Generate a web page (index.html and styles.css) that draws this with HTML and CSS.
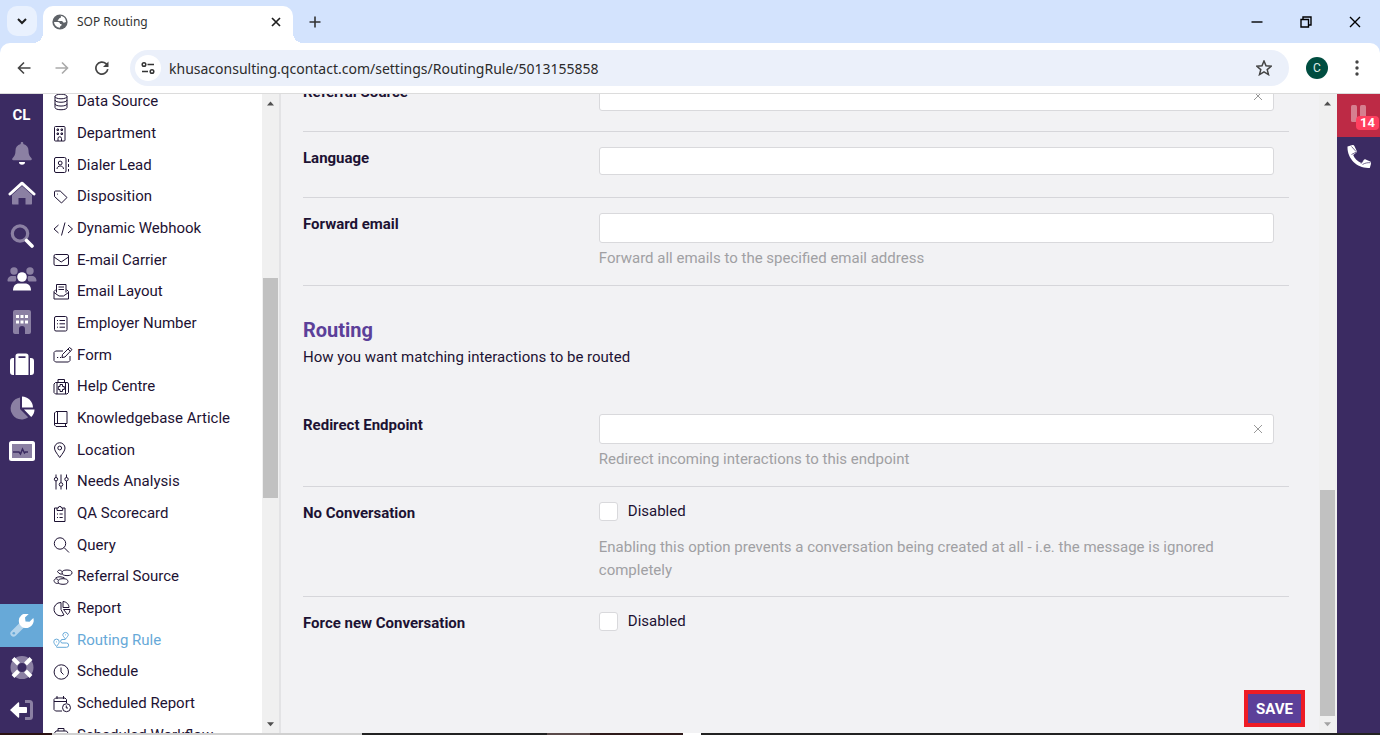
FILE: index.html
```html
<!DOCTYPE html>
<html lang="en">
<head>
<meta charset="utf-8">
<title>SOP Routing</title>
<link rel="stylesheet" href="styles.css">
</head>
<body>
<header class="browser">
  <div class="tabstrip">
    <button class="tab-search" aria-label="Search tabs"><svg width="12" height="12" viewBox="0 0 12 12"><path d="M2 4l4 4 4-4" fill="none" stroke="#1f1f1f" stroke-width="2"/></svg></button>
    <div class="tab">
      <svg width="16" height="16" viewBox="0 0 16 16"><circle cx="8" cy="8" r="7.6" fill="#5f6368"/><path d="M8 1.800c1.700.5 1.200 2-.2 2.300-.8.2-.6 1.200-1.400 1.500-1.200.4-.8 1.500.4 1.500h3c1 0 .8 1.600 2 1.600l2.300-.6a6.200 6.200 0 0 0-2-4.800A6 6 0 0 0 8 1.800zM2 8h4c1.600 0 2 1 2 2h1.500v1.600c-1 .2-1.500.8-1.500 2.200A6 6 0 0 1 2 8z" fill="#fff"/></svg>
      <span class="tab-title">SOP Routing</span>
      <button class="plain" aria-label="Close tab"><svg width="10" height="10" viewBox="0 0 10 10"><path d="M1 1l8 8M9 1l-8 8" stroke="#1f1f1f" stroke-width="1.700"/></svg></button>
    </div>
    <button class="plain new-tab" aria-label="New tab"><svg width="12" height="12" viewBox="0 0 12 12"><path d="M6 .5v11M.5 6h11" stroke="#333" stroke-width="1.600"/></svg></button>
    <div class="window-buttons">
      <button class="plain" aria-label="Minimize"><svg width="12" height="12" viewBox="0 0 12 12"><path d="M.5 6h11" stroke="#000" stroke-width="1.400"/></svg></button>
      <button class="plain" aria-label="Restore"><svg width="12" height="12" viewBox="0 0 12 12"><path d="M1 3.500h7.500V11H1zM3 3.500V1h8v8H8.500" fill="none" stroke="#000" stroke-width="1.400"/></svg></button>
      <button class="plain" aria-label="Close"><svg width="12" height="12" viewBox="0 0 12 12"><path d="M1 1l10 10M11 1L1 11" stroke="#000" stroke-width="1.400"/></svg></button>
    </div>
  </div>
  <div class="toolbar">
    <button class="plain nav" aria-label="Back"><svg width="14" height="14" viewBox="0 0 14 14"><path d="M13.500 7H2M7 1.500L1.500 7 7 12.500" fill="none" stroke="#444" stroke-width="1.600"/></svg></button>
    <button class="plain nav" aria-label="Forward"><svg width="14" height="14" viewBox="0 0 14 14"><path d="M.5 7H12M7 1.500L12.500 7 7 12.500" fill="none" stroke="#aaa" stroke-width="1.600"/></svg></button>
    <button class="plain nav reload" aria-label="Reload"><svg width="14" height="14" viewBox="0 0 14 14"><path d="M12.800 8.200A6 6 0 1 1 11 2.700l1.500 1.500" fill="none" stroke="#444" stroke-width="1.700"/><path d="M13.500.5V6H8z" fill="#444"/></svg></button>
    <div class="omnibox">
      <button class="site-info" aria-label="Site information"><svg width="14" height="14" viewBox="0 0 14 14" fill="none" stroke="#333" stroke-width="1.500"><circle cx="3" cy="3.500" r="1.800"/><path d="M6.500 3.500h6.500M1 10.500h6"/><circle cx="11" cy="10.500" r="1.800"/></svg></button>
      <input class="url" type="text" aria-label="Address" value="khusaconsulting.qcontact.com/settings/RoutingRule/5013155858">
      <button class="plain star" aria-label="Bookmark"><svg width="16" height="16" viewBox="0 0 16 16"><path d="M8 1l2 4.800 5.200.4-4 3.400 1.300 5L8 11.900l-4.500 2.700 1.300-5-4-3.400 5.200-.4z" fill="none" stroke="#444" stroke-width="1.500"/></svg></button>
    </div>
    <button class="avatar" aria-label="Profile">C</button>
    <button class="plain more" aria-label="More"><svg width="4" height="16" viewBox="0 0 4 16" fill="#444"><circle cx="2" cy="2" r="1.700"/><circle cx="2" cy="8" r="1.700"/><circle cx="2" cy="14" r="1.700"/></svg></button>
  </div>
</header>

<div class="app">
  <nav class="rail" aria-label="Main">
    <a class="rail-user" href="#">CL</a>
    <a class="rail-bell" href="#" aria-label="Notifications"><svg width="22" height="24" viewBox="0 0 22 24"><path class="dim" d="M11 1c.8 0 1.300.5 1.300 1.200V3c3.500.7 5.200 3.500 5.200 6.500 0 4 1.200 6 3 7.700.8.800.2 2-.8 2H2.300c-1 0-1.600-1.200-.8-2 1.800-1.700 3-3.700 3-7.700 0-3 1.700-5.800 5.200-6.500v-.8C9.700 1.500 10.200 1 11 1z"/><path class="lit" d="M8 21h6a3 2.800 0 0 1-6 0z"/></svg></a>
    <a href="#" aria-label="Home"><svg width="28" height="24" viewBox="0 0 28 24"><path class="dim" d="M14 5L4 14v8.500c0 .6.400 1 1 1h5.500V17h7v6.500H23c.6 0 1-.4 1-1V14z"/><path d="M2 13L14 2.200 26 13" fill="none" stroke="#fff" stroke-width="3" stroke-linecap="round" stroke-linejoin="round"/></svg></a>
    <a href="#" aria-label="Search"><svg width="24" height="24" viewBox="0 0 24 24"><circle cx="10" cy="9.500" r="7.700" fill="none" stroke="#8b80a3" stroke-width="3.200"/><path d="M16.500 16.500L22 22" stroke="#fff" stroke-width="3.600" stroke-linecap="round"/></svg></a>
    <a href="#" aria-label="Contacts"><svg width="30" height="24" viewBox="0 0 30 24"><g class="dim"><circle cx="7" cy="4" r="3.700"/><circle cx="23" cy="4" r="3.700"/><path d="M.5 14c0-3.500 2-5 4.500-5h3.500c1 0 1.200 5-.5 5.500H1zM29.500 14c0-3.500-2-5-4.500-5h-3.500c-1 0-1.200 5 .5 5.500h7z"/></g><circle class="lit" cx="15" cy="10" r="4.800"/><path class="lit" d="M6 23.500c0-4.500 2.500-7 6-7h6c3.500 0 6 2.500 6 7z"/></svg></a>
    <a href="#" aria-label="Companies"><svg width="20" height="24" viewBox="0 0 20 24"><path class="dim" d="M3 0h14a2 2 0 0 1 2 2v20a2 2 0 0 1-2 2h-4v-5a3 3 0 0 0-6 0v5H3a2 2 0 0 1-2-2V2a2 2 0 0 1 2-2z"/><path class="lit" d="M4 5h3v3H4zM8.500 5h3v3h-3zM13 5h3v3h-3zM4 10.500h3v3H4zM8.500 10.500h3v3h-3zM13 10.500h3v3h-3z"/></svg></a>
    <a href="#" aria-label="Cases"><svg width="24" height="24" viewBox="0 0 24 24"><path class="lit" d="M0 8a3 3 0 0 1 3-3h1v17H3a3 3 0 0 1-3-3zM24 8a3 3 0 0 0-3-3h-1v17h1a3 3 0 0 0 3-3zM5.500 22V3a2.500 2.500 0 0 1 2.500-2.500h8A2.500 2.500 0 0 1 18.500 3v19zM8.500 5h7V3.200h-7z"/></svg></a>
    <a href="#" aria-label="Reports"><svg width="26" height="24" viewBox="0 0 26 24"><path class="dim" d="M11 1.500V13l8.200 8.200A11 11 0 1 1 11 1.500z"/><path class="lit" d="M13 .5c6 0 11 5 11 11H13zM15 13.500h10.500c0 3-1.300 5.700-3.300 7.500z"/></svg></a>
    <a href="#" aria-label="Monitor"><svg width="26" height="22" viewBox="0 0 26 22"><rect class="lit" y="1" width="26" height="20" rx="2.500"/><rect x="3" y="4" width="20" height="14" fill="#8b80a3"/><path d="M4 12h6l1.500 2 2-5 2 4 1-1H19" fill="none" stroke="#3b2b62" stroke-width="1.500"/></svg></a>
    <div class="rail-bottom">
      <a class="active" href="#" aria-label="Settings"><svg width="24" height="24" viewBox="0 0 24 24"><path d="M3.500 19.500L12 11" stroke="#b3d4ec" stroke-width="6.200" stroke-linecap="round"/><circle cx="3.800" cy="19.200" r="1.300" fill="#67a9d8"/><path class="lit" d="M23.300 4L19.500 7.800l-4-.3-.5-4L18.800-.1A7.500 7.500 0 0 0 9 8.500c.6 2.600 3 5.300 6 5.500A7.600 7.600 0 0 0 23.300 4z"/></svg></a>
      <a class="short" href="#" aria-label="Help"><svg width="24" height="24" viewBox="0 0 24 24"><circle cx="12" cy="11.500" r="8" fill="none" stroke="#8b80a3" stroke-width="7"/><path d="M3 2.500L8.500 8M21 2.500L15.500 8M3 20.500L8.500 15M21 20.500L15.500 15" stroke="#fff" stroke-width="4"/></svg></a>
      <a class="short" href="#" aria-label="Log out"><svg width="24" height="22" viewBox="0 0 24 22"><path d="M15 2.500h4.500a2 2 0 0 1 2 2v13a2 2 0 0 1-2 2H15" fill="none" stroke="#8b80a3" stroke-width="3"/><path class="lit" d="M0 11l8-7.500c.6-.5 1.200-.2 1.200.7V8H16c.6 0 1 .4 1 1v4c0 .6-.4 1-1 1H9.200v3.800c0 .9-.6 1.200-1.200.7z"/></svg></a>
    </div>
  </nav>

  <aside class="menu">
    <div class="menu-view">
    <ul class="menu-list">
      <li><a href="#"><svg viewBox="0 0 20 18"><ellipse cx="8" cy="3.500" rx="6" ry="2.300"/><path d="M2 3.500v11c0 3 12 3 12 0v-11M2 7c0 3 12 3 12 0M2 10.800c0 3 12 3 12 0"/></svg>Data Source</a></li>
      <li><a href="#"><svg viewBox="0 0 20 18"><rect x="1.500" y="1.500" width="10.500" height="14.500" rx="1"/><path d="M5 16v-2.500a1.700 1.700 0 0 1 3.500 0V16M4 4h1.500v1.500H4zM8 4h1.500v1.500H8zM4 8h1.500v1.500H4zM8 8h1.500v1.500H8z"/></svg>Department</a></li>
      <li><a href="#"><svg viewBox="0 0 20 18"><rect x="1.500" y="1.500" width="11.500" height="15" rx="1.500"/><circle cx="7.200" cy="7" r="1.900"/><path d="M4 13c0-4 6.500-4 6.500 0M15.500 3v3M15.500 8v3M15.500 13v2.500"/></svg>Dialer Lead</a></li>
      <li><a href="#"><svg viewBox="0 0 20 18"><path d="M1.500 4a1 1 0 0 1 1-1h4.700L14 9.500 8.500 15 1.500 8.500zM4.500 5.700v.8"/></svg>Disposition</a></li>
      <li><a href="#"><svg viewBox="0 0 20 18"><path d="M5.500 5L1 9l4.500 4M15 5l4.500 4-4.500 4M12 2.500l-3.500 13"/></svg>Dynamic Webhook</a></li>
      <li><a href="#"><svg viewBox="0 0 20 18"><rect x="1" y="3.500" width="14.500" height="11" rx="1.500"/><path d="M1 6l7.200 5 7.300-5"/></svg>E-mail Carrier</a></li>
      <li><a href="#"><svg viewBox="0 0 20 18"><path d="M3.500 9.500v-8h9.500v8M5.500 4h5.500M5.500 6.500h5.500M3 6.500L1 8.500v7.500h14.500v-7.500l-2-2M1 9.500l5 3.500h4.500l5-3.500"/></svg>Email Layout</a></li>
      <li><a href="#"><svg viewBox="0 0 20 18"><rect x="1.500" y="1.500" width="12.500" height="14.500" rx="1.500"/><path d="M4 5.500h1M6.500 5.500H12M4 8.800h1M6.500 8.800H12M4 12.200h1M6.500 12.200H12"/></svg>Employer Number</a></li>
      <li><a href="#"><svg viewBox="0 0 20 18"><path d="M10 5H2.500L1 6.500v8L2.500 16h13l1.500-1.500V10M9.500 8.500L16.500 1.500l2.500 2-7 7.500-3 .5zM15 3l2.500 2.500M4 11.500h1.200M7 11.500h1.200"/></svg>Form</a></li>
      <li><a href="#"><svg viewBox="0 0 20 18"><path d="M5 4V1.500h6.500V4M4 4.500v11.500M12.500 4.500v11.500M2.500 4.500h11.500a1.500 1.500 0 0 1 1.500 1.500v8.500l-1.500 1.500H2.500L1 14.500V6zM7 6.500h2.500v2h1.800v3H9.500v2H7v-2H5.300v-3H7z"/></svg>Help Centre</a></li>
      <li><a href="#"><svg viewBox="0 0 20 18"><path d="M14 13.500v-12H3L1.500 3v12L3 16.500h11M2 13.500h12M4.500 1.500v12M12.500 13.500v3"/></svg>Knowledgebase Article</a></li>
      <li><a href="#"><svg viewBox="0 0 20 18"><path d="M6.700 16.500C3.500 12 1.500 9.500 1.500 7a5.200 5.200 0 0 1 10.500 0c0 2.500-2 5-5.300 9.500z"/><circle cx="6.700" cy="7" r="1.900"/></svg>Location</a></li>
      <li><a href="#"><svg viewBox="0 0 20 18"><path d="M3 1.500v3M3 8v8.500M8 1.500v8M8 13.500v3M13.500 1.500v3M13.500 8v8.500"/><circle cx="3" cy="6.200" r="1.700"/><circle cx="8" cy="11.500" r="1.800"/><circle cx="13.500" cy="6.200" r="1.700"/></svg>Needs Analysis</a></li>
      <li><a href="#"><svg viewBox="0 0 20 18"><path d="M4 3H1.500v13.500H12V3H9.700M4 5.500h5.700V3H8.500a1.500 1.500 0 0 0-3.200 0H4zM4 9h1M6.500 9h3.200M4 12.500h1M6.500 12.500h3.200"/></svg>QA Scorecard</a></li>
      <li><a href="#"><svg viewBox="0 0 20 18"><circle cx="7" cy="7.500" r="5.700"/><path d="M11 11.500l5 5"/></svg>Query</a></li>
      <li><a href="#"><svg viewBox="0 0 20 18"><ellipse cx="14" cy="4.800" rx="5" ry="2.800"/><path d="M9.300 3.800C8 1.800 5.500 1.500 4.500 3.500 6 6 8 6.500 9.500 6"/><ellipse cx="10" cy="13.500" rx="5" ry="2.800"/><path d="M5.500 12.200C4 10.200 1.500 10.500 1 12.500c.5 3 3 3.500 5 2.500M2.500 10c3-1.800 6-1.500 9 0"/></svg>Referral Source</a></li>
      <li><a href="#"><svg viewBox="0 0 20 18"><path d="M8 2.500a6.700 6.700 0 1 0 3 12.500L8 9.500zM10 1.500c3.500.3 6 2.800 6 6h-6zM10.500 9.500H17c0 2-1 4-2.500 5z"/></svg>Report</a></li>
      <li><a class="current" href="#" aria-current="page"><svg viewBox="0 0 20 18"><path d="M3.500 15.500C1.500 13 .8 12 .8 10.800a2.700 2.700 0 0 1 5.400 0c0 1.200-.8 2.200-2.700 4.700zM12.500 8C10.500 5.500 9.800 4.800 9.800 3.700a2.800 2.800 0 0 1 5.500 0c0 1.100-.8 1.800-2.800 4.300zM12.500 8.500H9a1.800 1.800 0 0 0 0 3.500h4.500a2 2 0 0 1 0 4.300h-10M3.500 10.500v.8M12.500 3.500v.8"/></svg>Routing Rule</a></li>
      <li><a href="#"><svg viewBox="0 0 20 18"><circle cx="8.300" cy="9" r="7.200"/><path d="M8 4.500V9l2.500 2.500"/></svg>Schedule</a></li>
      <li><a href="#"><svg viewBox="0 0 20 18"><path d="M4 1v3M10.500 1v3M9 16H2.500L1 14.500V4.500L2.500 3h9.500l1.500 1.500V8M1 6.500h12.500"/><circle cx="13.500" cy="12.700" r="4"/><path d="M13.300 10.500v2.500H15"/></svg>Scheduled Report</a></li>
      <li><a href="#"><svg viewBox="0 0 20 18"><path d="M5 5V2.500h6V5M1.500 7L3 5h10.500L15 7v8H1.500zM1.500 9.500H15"/></svg>Scheduled Workflow</a></li>
    </ul>
    </div>
    <div class="scrollbar" aria-hidden="true">
      <svg viewBox="0 0 17 17"><path d="M4.500 12l4-4.500 4 4.500z"/></svg>
      <div class="menu-before"></div><div class="thumb menu-thumb"></div><div class="menu-after"></div>
      <svg viewBox="0 0 17 17"><path d="M4.500 6l4 4.500 4-4.500z"/></svg>
    </div>
  </aside>

  <main class="content">
    <form class="form">
      <div class="row first">
        <label class="name" for="referral">Referral Source</label>
        <div class="field clearable"><input id="referral" type="text"><button type="button" class="clear" aria-label="Clear referral source"><svg width="10" height="10" viewBox="0 0 10 10"><path d="M1 1l8 8M9 1l-8 8"/></svg></button></div>
      </div>
      <div class="row">
        <label class="name" for="language">Language</label>
        <div class="field"><input id="language" class="slim" type="text"></div>
      </div>
      <div class="row">
        <label class="name" for="forward">Forward email</label>
        <div class="field"><input id="forward" type="email"><p class="help">Forward all emails to the specified email address</p></div>
      </div>
      <section class="section-head">
        <h2>Routing</h2>
        <p>How you want matching interactions to be routed</p>
      </section>
      <div class="row">
        <label class="name" for="redirect">Redirect Endpoint</label>
        <div class="field clearable"><input id="redirect" type="text"><button type="button" class="clear" aria-label="Clear redirect endpoint"><svg width="10" height="10" viewBox="0 0 10 10"><path d="M1 1l8 8M9 1l-8 8"/></svg></button><p class="help">Redirect incoming interactions to this endpoint</p></div>
      </div>
      <div class="row">
        <span class="name">No Conversation</span>
        <div class="field"><label class="check"><input type="checkbox">Disabled</label><p class="help spaced">Enabling this option prevents a conversation being created at all - i.e. the message is ignored completely</p></div>
      </div>
      <div class="row last">
        <span class="name">Force new Conversation</span>
        <div class="field"><label class="check"><input type="checkbox">Disabled</label></div>
      </div>
      <footer class="actions"><button type="button" class="save">SAVE</button></footer>
    </form>
    <div class="scrollbar" aria-hidden="true">
      <svg viewBox="0 0 17 17"><path d="M4.500 12l4-4.500 4 4.500z"/></svg>
      <div class="main-before"></div><div class="thumb main-thumb"></div>
      <svg class="faded" viewBox="0 0 17 17"><path d="M4.500 6l4 4.500 4-4.500z"/></svg>
    </div>
  </main>

  <aside class="phone-rail">
    <button class="pause" aria-label="Paused, 14 waiting"><svg width="16" height="18" viewBox="0 0 16 18" fill="#d67f8f"><rect x="0" width="6" height="17" rx="1.500"/><rect x="9" width="6" height="17" rx="1.500"/></svg><span class="badge">14</span></button>
    <button class="call" aria-label="Call"><svg width="24" height="24" viewBox="0 0 24 24"><path class="lit" d="M.5 1.500L5.500.1c.9-.2 1.500.1 1.900.9l2.200 4.800c.3.800.1 1.500-.5 2L6.200 10C7.500 13.500 10.500 16.500 14.200 18l2.500-3c.5-.6 1.200-.8 2-.5l4.500 2c.8.400 1.100 1 .9 1.900L22.800 23C10.500 24 0 14 .5 1.500z"/><path d="M4.500 9.500l4.500-2.300M4.500 1.500l4.500 5M14 18.700l2.200-3M15.500 19.500c2.500-1.500 5-2 8-1.800" fill="none" stroke="#3b2b62" stroke-width=".7"/></svg></button>
  </aside>
</div>
<div class="taskbar-edge"></div>
</body>
</html>
```
FILE: styles.css
```css
* { box-sizing: border-box; }
body {
  margin: 0;
  height: 100vh;
  display: flex;
  flex-direction: column;
  overflow: hidden;
  font: 15px/23px Roboto, sans-serif;
  color: #1d1233;
  background: #fff;
}
button, input { font: inherit; color: inherit; }
button { cursor: pointer; }
a { color: inherit; text-decoration: none; }
h2, p, ul { margin: 0; padding: 0; }
svg { display: block; flex: none; }
.dim { fill: #8b80a3; }
.lit { fill: #fff; }
.plain {
  display: flex;
  align-items: center;
  justify-content: center;
  border: 0;
  padding: 0;
  background: none;
}

/* Browser frame */
.browser { flex: none; background: #d3e3fd; font-family: "Noto Sans", "Open Sans", sans-serif; }
.tabstrip { display: flex; align-items: stretch; height: 43px; padding: 0 1px 0 7px; }
.tab-search {
  display: flex;
  align-items: center;
  justify-content: center;
  width: 30px;
  height: 30px;
  margin: 6px 6px 0 0;
  padding: 0;
  border: 0;
  border-radius: 10px;
  background: #e9f1fe;
}
.tab {
  position: relative;
  display: flex;
  align-items: center;
  gap: 9px;
  width: 250px;
  margin-top: 6px;
  padding: 0 12px 6px 9px;
  border-radius: 10px 10px 0 0;
  background: #fff;
}
.tab::before, .tab::after {
  content: "";
  position: absolute;
  bottom: 0;
  width: 10px;
  height: 10px;
}
.tab::before { right: 100%; background: radial-gradient(circle at 0 0, transparent 10px, #fff 10px); }
.tab::after { left: 100%; background: radial-gradient(circle at 100% 0, transparent 10px, #fff 10px); }
.tab-title { flex: 1; font-size: 12px; color: #333; }
.new-tab { width: 44px; }
.window-buttons { display: flex; margin-left: auto; }
.window-buttons button { width: 49px; }
.toolbar {
  display: flex;
  align-items: center;
  height: 51px;
  padding: 0 9px 0 5px;
  border-bottom: 1px solid #dcdcdc;
  border-radius: 10px 10px 0 0;
  background: #fff;
}
.nav { width: 38px; height: 36px; }
.reload { width: 42px; }
.omnibox {
  display: flex;
  align-items: center;
  flex: 1;
  height: 36px;
  margin-left: 7px;
  padding: 0 16px 0 5px;
  border-radius: 18px;
  background: #ebf0fa;
}
.site-info {
  display: flex;
  align-items: center;
  justify-content: center;
  width: 26px;
  height: 26px;
  padding: 0;
  border: 0;
  border-radius: 50%;
  background: #fff;
}
.url {
  flex: 1;
  min-width: 0;
  margin-left: 8px;
  padding: 0;
  border: 0;
  outline: 0;
  background: none;
  font-size: 14px;
  color: #2b2b2b;
}
.star { width: 18px; }
.avatar {
  width: 22px;
  height: 22px;
  margin: 0 22px 0 17px;
  padding: 0;
  border: 0;
  border-radius: 50%;
  background: #004d40;
  color: #dfece9;
  font: 12px/22px Roboto, sans-serif;
}
.more { width: 14px; height: 24px; margin-right: 7px; }

/* Application */
.app { display: flex; flex: 1; min-height: 0; }
.rail {
  display: flex;
  flex-direction: column;
  flex: none;
  width: 43px;
  background: #3b2b62;
}
.rail a { display: flex; align-items: center; justify-content: center; height: 43px; }
.rail .rail-user { height: 40px; padding-top: 3px; font-size: 15px; font-weight: 700; color: #fff; }
.rail .rail-bell { height: 37px; }
.rail-bottom { margin-top: auto; padding-bottom: 2px; }
.rail .short { height: 42px; }
.rail .active { background: #67a9d8; }

.menu { display: flex; flex: none; width: 238px; border-right: 2px solid #e3e3e5; }
.menu-view { display: flex; flex-direction: column; flex: 1; overflow: hidden; }
.menu-list {
  display: flex;
  flex-direction: column;
  flex: 1;
  margin: -8px 0 -18px;
  list-style: none;
}
.menu-list li { flex: 1; display: flex; }
.menu-list a { display: flex; align-items: center; gap: 4px; flex: 1; padding-left: 10px; white-space: nowrap; }
.menu-list svg { width: 20px; height: 18px; fill: none; stroke: currentColor; stroke-width: 1; }
.menu-list .current { color: #67a9d8; }

.scrollbar {
  display: flex;
  flex-direction: column;
  flex: none;
  width: 17px;
  padding: 0 1px;
  background: #f0f0f0;
}
.content .scrollbar { width: 18px; padding-right: 2px; }
.scrollbar svg { width: 15px; height: 17px; fill: #505050; }
.scrollbar .faded { fill: #a3a3a3; }
.thumb { background: #c1c1c1; }
.menu-before { flex: 167; }
.menu-thumb { flex: 220; }
.menu-after { flex: 218; }
.main-before { flex: 379; }
.main-thumb { flex: 226; }

.content { display: flex; flex: 1; min-width: 0; background: #f2f2f4; overflow: hidden; }
.form { display: flex; flex-direction: column; flex: 1; min-width: 0; padding: 0 14px 6px 22px; }
.row {
  display: grid;
  grid-template-columns: 3fr 7fr;
  flex: none;
  min-height: 66px;
  margin-right: 16px;
  padding: 15px 0;
  border-bottom: 1px solid #d6d6da;
}
.row.first { margin-top: -28px; }
.row.last { border-bottom: 0; }
.name { font-weight: 700; }
.field { position: relative; min-width: 0; margin-right: 15px; }
.field input[type="text"], .field input[type="email"] {
  display: block;
  width: 100%;
  height: 30px;
  padding: 0 32px 0 10px;
  border: 1px solid #d9d9dc;
  border-radius: 3px;
  background: #fff;
}
.field input.slim { height: 28px; }
.clear {
  position: absolute;
  top: 0;
  right: 0;
  display: flex;
  align-items: center;
  justify-content: center;
  width: 32px;
  height: 30px;
  padding: 0;
  border: 0;
  background: none;
}
.clear svg { fill: none; stroke: #999; stroke-width: 1; }
.help { margin-top: 4px; color: #a0a0a3; }
.help.spaced { margin-top: 16px; margin-bottom: -1px; }
.check { display: flex; align-items: center; gap: 10px; height: 18px; }
.check input {
  appearance: none;
  width: 19px;
  height: 19px;
  margin: 0;
  border: 1px solid #d9d9dc;
  border-radius: 3px;
  background: #fff;
}
.section-head { flex: none; padding: 31px 0 30px; }
.section-head h2 { font-size: 20px; line-height: 26px; font-weight: 700; color: #5c4099; }
.section-head p { margin-top: 3px; }
.actions { display: flex; justify-content: flex-end; margin-top: auto; }
.save {
  height: 37px;
  padding: 1px 8px 0;
  border: 4px solid #ee1c25;
  background: #5c4099;
  color: #fff;
  font-weight: 700;
}

.phone-rail { flex: none; width: 43px; background: #3b2b62; }
.phone-rail button {
  position: relative;
  display: flex;
  align-items: center;
  justify-content: center;
  width: 100%;
  height: 43px;
  padding: 0;
  border: 0;
  background: none;
}
.phone-rail .pause { padding-bottom: 4px; background: #bd2a45; }
.phone-rail .call { padding-bottom: 4px; }
.badge {
  position: absolute;
  right: 1px;
  bottom: 7px;
  padding: 0 4px;
  border-radius: 4px;
  background: #ff3f5f;
  color: #fff;
  font-size: 13px;
  line-height: 14px;
  font-weight: 700;
}
.taskbar-edge {
  flex: none;
  height: 2px;
  background: linear-gradient(90deg, #2b1212 52px, #d0d0d0 52px 362px, #222 362px 547px, #5a4a4a 547px 590px, #2e1a1a 590px 683px, #fff 683px 701px, #222 701px);
}
```
